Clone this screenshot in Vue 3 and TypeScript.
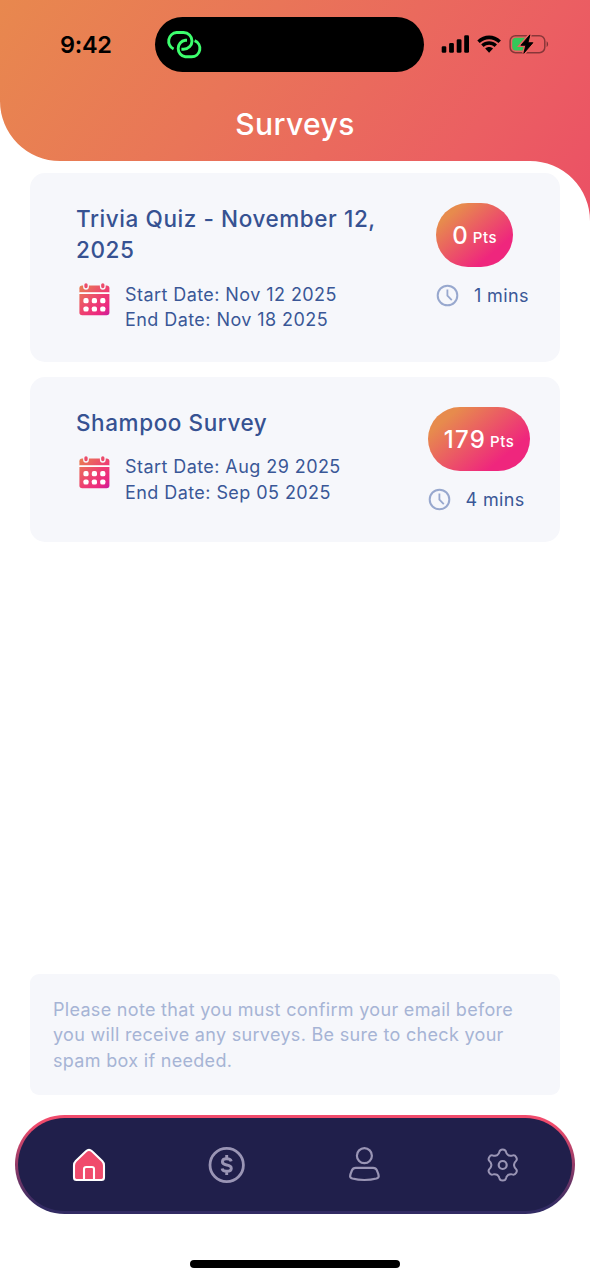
<script setup lang="ts">
interface Survey {
  title: string
  start: string
  end: string
  points: number
  minutes: number
}

const surveys: Survey[] = [
  { title: 'Trivia Quiz - November 12, 2025', start: 'Nov 12 2025', end: 'Nov 18 2025', points: 0, minutes: 1 },
  { title: 'Shampoo Survey', start: 'Aug 29 2025', end: 'Sep 05 2025', points: 179, minutes: 4 },
]

const dots = [
  { x: 7.4, y: 17.7 }, { x: 15.8, y: 17.7 }, { x: 24.2, y: 17.7 },
  { x: 7.4, y: 26 }, { x: 15.8, y: 26 }, { x: 24.2, y: 26 },
]

// One gear lobe as four cubic segments, repeated around the centre.
const lobe: [number, number][] = [
  [-4.4, -11], [-3.6, -11.3], [-3.4, -12.9],
  [-3.1, -14.8], [-1.7, -15.6], [0, -15.6],
  [1.7, -15.6], [3.1, -14.8], [3.4, -12.9],
  [3.6, -11.3], [4.4, -11], [5.6, -9.8],
]
const gearPath: string = (() => {
  let d = 'M-5.6 -9.8'
  for (let i = 0; i < 6; i++) {
    const a = (i * Math.PI) / 3
    const pts = lobe.map(([x, y]) =>
      `${(x * Math.cos(a) - y * Math.sin(a)).toFixed(2)} ${(x * Math.sin(a) + y * Math.cos(a)).toFixed(2)}`)
    for (let j = 0; j < pts.length; j += 3) d += ` C${pts[j]} ${pts[j + 1]} ${pts[j + 2]}`
  }
  return d + 'Z'
})()
</script>

<template>
  <div class="screen">
    <header class="header">
      <div class="status">
        <span class="time">9:42</span>
        <div class="island">
          <svg class="link" width="36" height="30" viewBox="166.4 30 36 30" fill="none" stroke="#3dff6e" stroke-width="2.9">
            <path d="M174 49A8.7 8.7 0 0 1 177 32.5H184A8.4 8.4 0 0 1 184 49.3H181.8" />
            <path d="M187.4 40.2H185.7A8.4 8.4 0 0 0 185.7 56.8H192A8.4 8.4 0 0 0 195 40.6" />
          </svg>
        </div>
        <svg class="indicators" width="110" height="24" viewBox="440 32 110 24">
          <rect x="441.7" y="46.2" width="4.6" height="6.6" rx="1.3" />
          <rect x="449.1" y="43" width="4.8" height="9.8" rx="1.3" />
          <rect x="456.7" y="39.2" width="4.8" height="13.6" rx="1.3" />
          <rect x="464.2" y="35.3" width="4.8" height="17.5" rx="1.3" />
          <path d="M477.3 40.6C484 33.8 494.2 33.8 500.9 40.6L498.5 43.1C493.2 37.9 485 37.9 479.7 43.1Z" />
          <path d="M481.2 44.6C485.6 40.2 492.6 40.2 497 44.6L494.5 47.1C491.5 44.1 486.7 44.1 483.7 47.1Z" />
          <path d="M485.2 48.6C487.4 46.6 490.8 46.6 493 48.6L489.1 52.7Z" />
          <rect x="510.1" y="35.7" width="34.7" height="17" rx="5.4" fill="none" stroke="#000" stroke-opacity=".42" stroke-width="1.5" />
          <path d="M546.6 41.2C548.6 42.2 548.6 46 546.6 47Z" fill-opacity=".45" />
          <path d="M515.8 37.8H526V50.4H515.8Q512.2 50.4 512.2 46.8V41.4Q512.2 37.8 515.8 37.8Z" fill="#34c759" />
          <path d="M529.9 34.9L520.9 45.3H525.8L523.9 53.2L532.9 42.7H528Z" fill="#000" stroke="#eb6360" stroke-width="3.6" />
          <path d="M529.9 34.9L520.9 45.3H525.8L523.9 53.2L532.9 42.7H528Z" stroke="#000" stroke-width=".9" stroke-linejoin="round" />
        </svg>
      </div>
      <h1 class="page-title">Surveys</h1>
    </header>

    <svg class="defs" width="0" height="0">
      <defs>
        <linearGradient id="calendarFill" gradientUnits="userSpaceOnUse" x1="0" y1="1" x2="31" y2="33">
          <stop offset="0" stop-color="#e8864f" />
          <stop offset=".55" stop-color="#ee3f72" />
          <stop offset=".8" stop-color="#ec2781" />
          <stop offset="1" stop-color="#c41fa0" />
        </linearGradient>
      </defs>
    </svg>

    <main class="content">
      <article v-for="survey in surveys" :key="survey.title" class="card">
        <div class="details">
          <h2 class="title">{{ survey.title }}</h2>
          <div class="schedule">
            <svg class="calendar" width="31" height="34" viewBox="0.4 0 31 34">
              <path d="M3.6 2.5H28Q30.8 2.5 30.8 5.3V9.4H.8V5.3Q.8 2.5 3.6 2.5Z" fill="url(#calendarFill)" />
              <path d="M.8 11H30.8V29.5Q30.8 32.3 28 32.3H3.6Q.8 32.3 .8 29.5Z" fill="url(#calendarFill)" />
              <rect x=".8" y="9.4" width="30" height="1.6" fill="#fff" />
              <g stroke-linecap="round">
                <path d="M7.4 1.8V3.8M24.2 1.8V3.8" stroke="#f6f7fb" stroke-width="5.8" />
                <path d="M7.4 1.8V3.6M24.2 1.8V3.6" stroke="#ec4b6a" stroke-width="3.3" />
              </g>
              <rect v-for="dot in dots" :key="`${dot.x}-${dot.y}`" :x="dot.x - 2.6" :y="dot.y - 2.6" width="5.2" height="5.2" rx="1.9" fill="#fff" />
            </svg>
            <div class="dates">
              <div>Start Date: {{ survey.start }}</div>
              <div>End Date: {{ survey.end }}</div>
            </div>
          </div>
        </div>
        <div class="reward">
          <div class="pill"><span class="points">{{ survey.points }}</span><span class="unit">Pts</span></div>
          <div class="duration">
            <svg width="23" height="23" viewBox="0 0 23 23" fill="none" stroke="#98a8ce">
              <circle cx="11.5" cy="11.5" r="9.8" stroke-width="2" />
              <path d="M11.4 5.4V11.6L15.8 16.2" stroke-width="1.8" />
            </svg>
            <span>{{ survey.minutes }} mins</span>
          </div>
        </div>
      </article>
    </main>

    <aside class="note">Please note that you must confirm your email before you will receive any surveys. Be sure to check your spam box if needed.</aside>

    <nav class="tabs">
      <a class="tab">
        <svg width="40" height="40" viewBox="-20 -20 40 40">
          <path d="M-3 -13.7Q0 -16.5 3 -13.7L13.2 -4Q15 -2.2 15 .4V12.5Q15 15 12.5 15H-12.5Q-15 15 -15 12.5V.4Q-15 -2.2 -13.2 -4Z" fill="#f04b6c" stroke="#fff" stroke-width="2.1" />
          <path d="M-5 15V4.2Q-5 2 -2.8 2H2.8Q5 2 5 4.2V15" fill="none" stroke="#fff" stroke-width="2.1" />
        </svg>
      </a>
      <a class="tab">
        <svg width="40" height="40" viewBox="-19.7 -20 40 40" fill="none" stroke="#9a95b5">
          <circle r="16.7" stroke-width="2.8" />
          <path d="M4.5 -3.6C4.1 -5.4 2.5 -6.2 0 -6.2C-2.6 -6.2 -4.3 -5.2 -4.3 -3.3C-4.3 -1.1 -2.5 -.5 0 0C2.8 .5 4.6 1.3 4.6 3.4C4.6 5.3 2.8 6.2 0 6.2C-2.7 6.2 -4.3 5.3 -4.6 3.4M0 -10V-6M0 6V10" stroke-width="2.9" />
        </svg>
      </a>
      <a class="tab">
        <svg width="40" height="40" viewBox="-19.4 -20 40 40" fill="none" stroke="#9a95b5" stroke-width="2.2">
          <circle cy="-9.3" r="7.5" />
          <path d="M-8.8 2.8H8.8Q11.4 2.8 12.4 5.2Q14.3 9.5 14.3 11.2Q14.3 12.8 12 13.5Q6.5 15 0 15Q-6.5 15 -12 13.5Q-14.3 12.8 -14.3 11.2Q-14.3 9.5 -12.4 5.2Q-11.4 2.8 -8.8 2.8Z" />
        </svg>
      </a>
      <a class="tab">
        <svg width="40" height="40" viewBox="-19.7 -20 40 40" fill="none" stroke="#9a95b5">
          <path :d="gearPath" stroke-width="2" />
          <circle r="4" stroke-width="2.2" />
        </svg>
      </a>
    </nav>
    <div class="home-bar"></div>
  </div>
</template>

<style>
body {
  margin: 0;
  background: #fff;
}
</style>

<style scoped>
.screen {
  width: 590px;
  height: 1280px;
  display: flex;
  flex-direction: column;
  overflow: hidden;
  background: #fff;
  font-family: Inter, "Liberation Sans", sans-serif;
  color: #3a5797;
}

.header {
  position: relative;
  height: 161px;
  flex: none;
  isolation: isolate;
}

.header::before {
  content: "";
  position: absolute;
  z-index: -1;
  inset: 0 0 -60px;
  background: linear-gradient(125deg, #e8884e 0%, #e97558 38%, #eb5f62 76%, #eb5065 100%);
  clip-path: path("M0 0H590V221A60 60 0 0 0 530 161H60A60 60 0 0 1 0 101Z");
}

.status {
  display: flex;
  height: 55px;
  padding-top: 17px;
  align-items: center;
}

.time {
  width: 95px;
  padding-left: 60px;
  color: #000;
  font-size: 23.5px;
  font-weight: 600;
  letter-spacing: -0.3px;
}

.island {
  box-sizing: border-box;
  width: 269px;
  height: 55px;
  padding-left: 11px;
  display: flex;
  align-items: center;
  border-radius: 28px;
  background: #000;
}

.indicators {
  margin-left: 16px;
  margin-top: -1px;
}

.page-title {
  margin: 32px 0 0;
  text-align: center;
  color: #fff;
  font-size: 30px;
  line-height: 40px;
  font-weight: 550;
  letter-spacing: 0.4px;
}

.defs {
  position: absolute;
}

.content {
  position: relative;
  display: flex;
  flex-direction: column;
  gap: 15px;
  padding: 11.5px 30px 0;
}

.card {
  display: flex;
  justify-content: space-between;
  padding: 30px 30px 30px 46px;
  border-radius: 15px;
  background: #f6f7fb;
}

.details {
  width: 320px;
}

.title {
  margin: 0 0 16px;
  color: #365292;
  font-size: 22.5px;
  line-height: 31.5px;
  font-weight: 550;
  letter-spacing: 0.58px;
}

.schedule {
  display: flex;
  margin-bottom: -1px;
  padding-left: 2.5px;
}

.calendar {
  margin-top: 1.5px;
}

.dates {
  margin-left: 15.5px;
  font-size: 18px;
  line-height: 25.5px;
  letter-spacing: 0.43px;
}

.reward {
  display: flex;
  flex-direction: column;
  align-items: flex-start;
}

.pill {
  height: 64.5px;
  padding: 0 15.5px 0 16px;
  display: flex;
  align-items: center;
  border-radius: 33px;
  color: #fff;
  font-weight: 550;
  background: linear-gradient(140deg, #e78b4d 18%, #ef267d 76%);
}

.points {
  margin-top: 1px;
  font-size: 24px;
  letter-spacing: 1.3px;
}

.unit {
  margin: 6px 0 0 3.8px;
  font-size: 15px;
  letter-spacing: 0.6px;
}

.duration {
  display: flex;
  align-items: center;
  margin: 15.7px 0 -0.7px;
  padding-right: 1.2px;
  gap: 14.7px;
  height: 25.5px;
  font-size: 18px;
  letter-spacing: 0.38px;
}

.note {
  margin: auto 30px 0;
  padding: 23px 23px 22px;
  border-radius: 9px;
  background: #f6f7fb;
  color: #a6b4d5;
  font-size: 18px;
  line-height: 25.5px;
  letter-spacing: 0.31px;
}

.tabs {
  box-sizing: border-box;
  flex: none;
  height: 99px;
  margin: 20px 15px 0;
  padding: 0 0.4px 0 2px;
  display: grid;
  grid-template-columns: repeat(4, 1fr);
  align-items: center;
  border: 3px solid transparent;
  border-radius: 50px;
  background:
    linear-gradient(#201f4b, #201f4b) padding-box,
    linear-gradient(#f04b6c 10%, #322b63 92%) border-box;
}

.tab {
  display: flex;
  justify-content: center;
}

.home-bar {
  flex: none;
  width: 210px;
  height: 8px;
  margin: 46px auto 12px;
  border-radius: 4px;
  background: #000;
}
</style>
